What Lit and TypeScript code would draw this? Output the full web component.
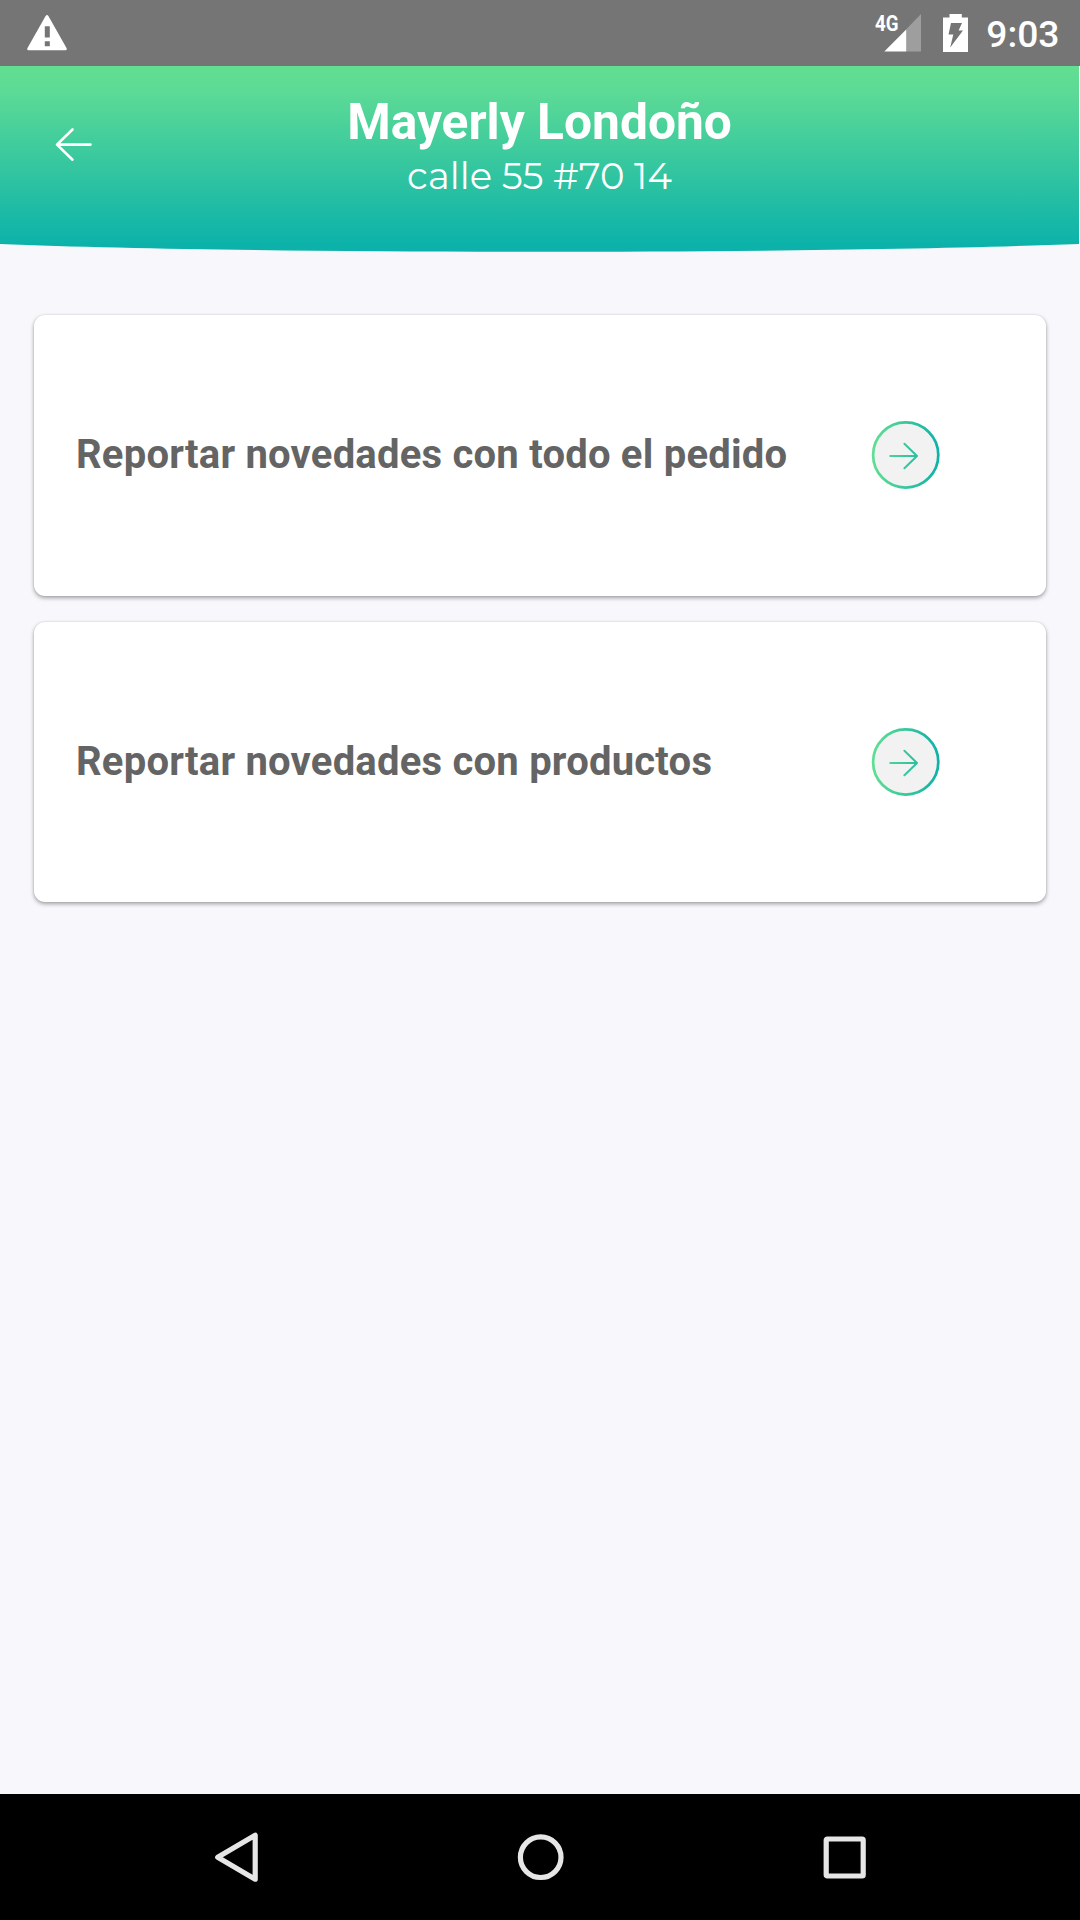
import { LitElement, html, css } from "lit";
import { customElement, property } from "lit/decorators.js";

@customElement("status-bar")
class StatusBar extends LitElement {
  static styles = css`
    :host { display: block; }
    .bar {
      height: 66px; box-sizing: border-box; padding: 0 20.5px 0 27px;
      display: flex; align-items: center; background: #757575; color: #fff;
    }
    .spacer { flex: 1; }
    svg { display: block; flex: none; }
    .net { font: 700 22px Roboto, sans-serif; }
    .battery { margin-left: 21px; }
    .time { margin-left: 18.5px; font: 500 37.2px/44px Roboto, sans-serif; padding-top: 2px; }
  `;
  render() {
    return html`<div class="bar">
      <svg width="40" height="36" viewBox="0 0 40 36">
        <path fill="#fff" fill-rule="evenodd" d="M18.6 .9Q20-.9 21.4.9L39.5 33Q40.4 35.3 38.5 35.3H1.5Q-.4 35.3.5 33ZM17.8 11.3V22.6H22.8V11.3ZM17.8 26.2V31.2H22.8V26.2Z" />
      </svg>
      <div class="spacer"></div>
      <svg width="49" height="42" viewBox="-2 -2 49 42">
        <path fill="#9e9e9e" d="M46 0V37.5H31V15.5Z" />
        <path fill="#fff" d="M9.3 37.5L31.2 15.6V37.5Z" />
        <text class="net" x="0" y="17.3" textLength="23.5" lengthAdjust="spacingAndGlyphs" fill="#fff">4G</text>
      </svg>
      <svg class="battery" width="25" height="38" viewBox="0 0 25 38">
        <path fill="#fff" d="M6.5 0H18.8V3.6H25V38H0V3.6H6.5Z" />
        <path fill="#757575" d="M8 9H19L15.6 16.5H20L7.2 33.5L10.3 20.5H5.5Z" />
      </svg>
      <div class="time">9:03</div>
    </div>`;
  }
}

@customElement("order-header")
class OrderHeader extends LitElement {
  @property() name = "";
  @property() address = "";
  static styles = css`
    :host { display: block; }
    .header {
      height: 186px; width: 1079px; box-sizing: border-box; padding: 0 54px;
      display: grid; grid-template-columns: 40px 1fr 40px;
      background: linear-gradient(#62df92 0, #5cda96 14%, #0cb2aa 96%);
      clip-path: path("M0 0H1079V178C820 188 270 188.8 0 178Z");
    }
    .back { display: block; margin-top: 60px; }
    .titles { display: flex; flex-direction: column; align-items: center; color: #fff; white-space: nowrap; }
    .name { font: 700 49.7px/58px Roboto, sans-serif; margin-top: 27px; }
    .address {
      font: 400 37px/44px Montserrat, "Open Sans", sans-serif;
      margin-top: 3px;
    }
  `;
  render() {
    return html`<div class="header">
      <svg class="back" width="40" height="38" viewBox="0 0 40 38">
        <path fill="none" stroke="#fff" stroke-width="2.6" stroke-linecap="round" stroke-linejoin="round" d="M36.5 18.6H3M18.5 3.5L3 18.6L18.5 33.7" />
      </svg>
      <div class="titles">
        <div class="name">${this.name}</div>
        <div class="address">${this.address}</div>
      </div>
    </div>`;
  }
}

@customElement("option-card")
class OptionCard extends LitElement {
  @property() label = "";
  static styles = css`
    :host { display: block; }
    .card {
      height: 280.6px; box-sizing: border-box; padding: 1px 106px 0 42px; border-radius: 11px;
      display: flex; align-items: center; justify-content: space-between;
      background: #fff;
      box-shadow: 0 2px 4px rgba(0, 0, 0, 0.34), 0 0 2px rgba(0, 0, 0, 0.12);
    }
    .label {
      font: 700 40px/48px Roboto, sans-serif; letter-spacing: 0.22px;
      color: #646464; white-space: nowrap; padding-bottom: 1px;
    }
    svg { display: block; flex: none; }
  `;
  render() {
    return html`<div class="card">
      <div class="label">${this.label}</div>
      <svg width="69" height="69" viewBox="0 0 69 69">
        <defs>
          <linearGradient id="g" gradientUnits="userSpaceOnUse" x1="0" y1="0" x2="69" y2="0">
            <stop offset="0" stop-color="#63df92" />
            <stop offset="1" stop-color="#0eb0a8" />
          </linearGradient>
        </defs>
        <circle cx="34.7" cy="34" r="32.6" fill="#f2f2f2" stroke="url(#g)" stroke-width="2.7" />
        <path fill="none" stroke="url(#g)" stroke-width="2" stroke-linecap="round" stroke-linejoin="round" d="M19.2 35.1L46 35L33.4 22.7M46 35L33.4 47.3" />
      </svg>
    </div>`;
  }
}

@customElement("nav-bar")
class NavBar extends LitElement {
  static styles = css`
    :host { display: block; }
    .nav {
      height: 126px; box-sizing: border-box; padding: 0 212px;
      display: flex; align-items: center; justify-content: space-between; background: #000;
    }
    svg { display: block; fill: none; stroke: #e6e6e6; stroke-width: 5.2; stroke-linejoin: round; }
  `;
  render() {
    return html`<div class="nav">
      <svg width="50" height="54" viewBox="0 0 50 54"><path d="M43.2 5.2V49.2L5.7 27.2Z" /></svg>
      <svg width="50" height="54" viewBox="0 0 50 54"><circle cx="25.7" cy="27.2" r="20.3" /></svg>
      <svg width="50" height="54" viewBox="0 0 50 54"><rect x="8.2" y="9" width="37" height="37" rx="1" /></svg>
    </div>`;
  }
}

@customElement("app-root")
class AppRoot extends LitElement {
  static styles = css`
    :host { display: block; }
    .screen { width: 1080px; height: 1920px; display: flex; flex-direction: column; background: #f7f7fc; overflow: hidden; }
    .options { flex: 1; padding: 63px 34px 0; display: flex; flex-direction: column; gap: 26px; }
  `;
  render() {
    return html`<div class="screen">
      <status-bar></status-bar>
      <order-header name="Mayerly Londoño" address="calle 55 #70 14"></order-header>
      <div class="options">
        <option-card label="Reportar novedades con todo el pedido"></option-card>
        <option-card label="Reportar novedades con productos"></option-card>
      </div>
      <nav-bar></nav-bar>
    </div>`;
  }
}
